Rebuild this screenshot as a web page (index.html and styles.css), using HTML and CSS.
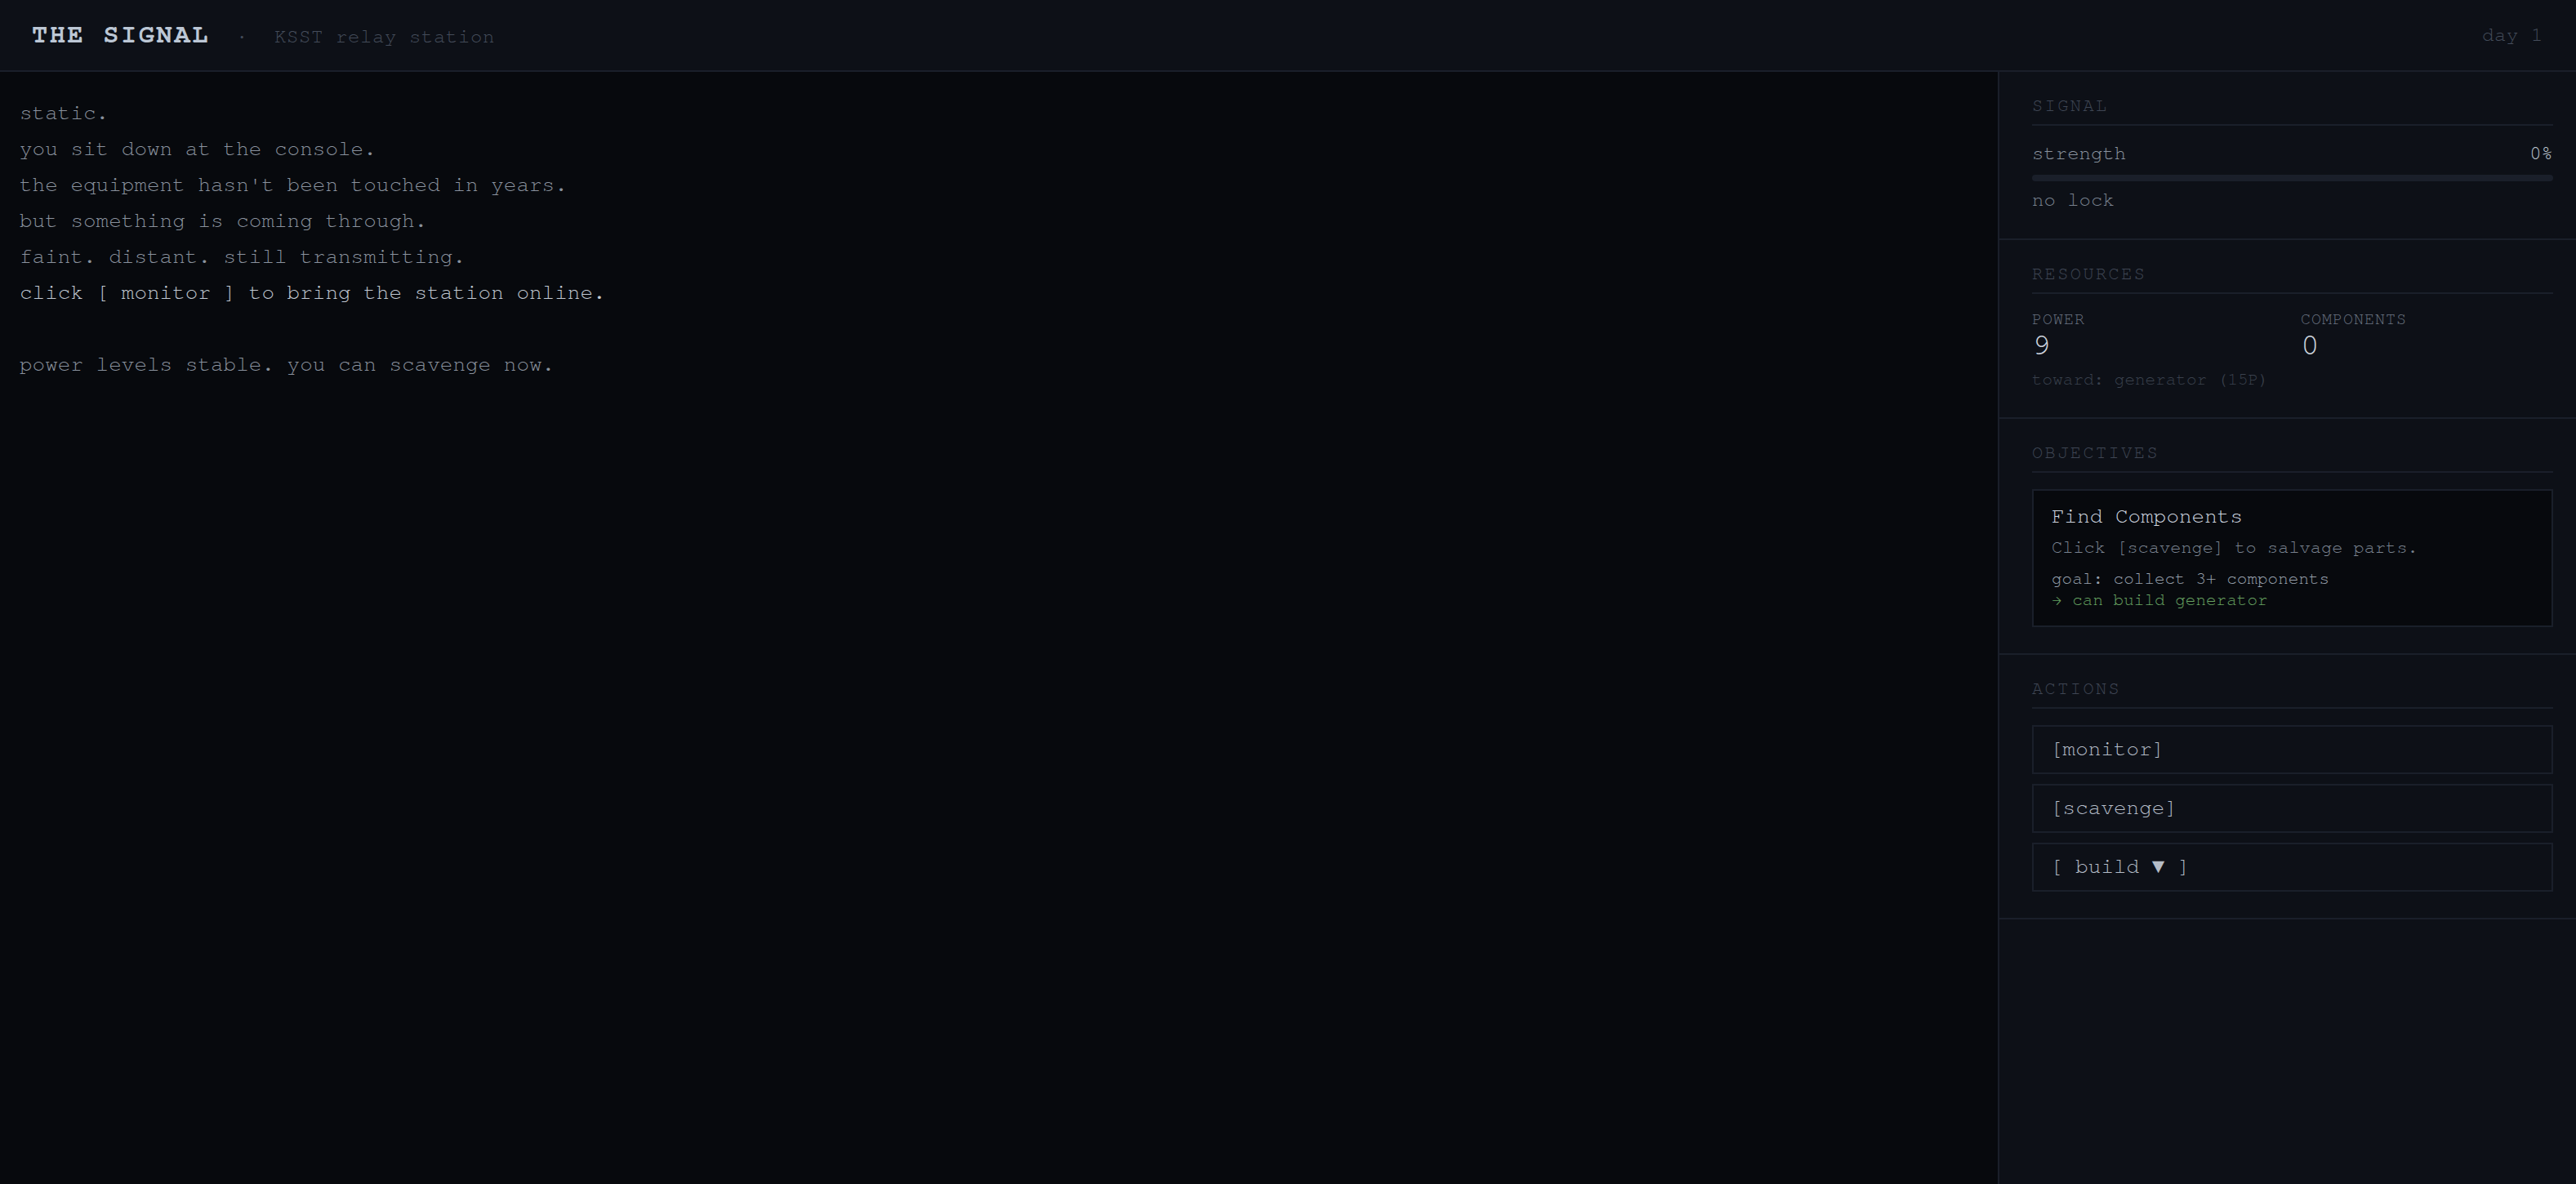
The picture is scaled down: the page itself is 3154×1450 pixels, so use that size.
FILE: index.html
```html
<!DOCTYPE html>
<html lang="en">
<head>
<meta charset="utf-8">
<title>THE SIGNAL</title>
<link rel="stylesheet" href="styles.css">
</head>
<body>
<div class="app">
  <header class="topbar">
    <div class="brand">
      <span class="title">THE SIGNAL</span>
      <span class="sep">·</span>
      <span class="sub">KSST relay station</span>
    </div>
    <span class="day">day 1</span>
  </header>
  <div class="body">
    <main class="log">
      <div class="line">static.</div>
      <div class="line">you sit down at the console.</div>
      <div class="line">the equipment hasn't been touched in years.</div>
      <div class="line">but something is coming through.</div>
      <div class="line">faint. distant. still transmitting.</div>
      <div class="line em">click [ monitor ] to bring the station online.</div>
      <div class="line blank"></div>
      <div class="line">power levels stable. you can scavenge now.</div>
    </main>
    <aside class="side">
      <section class="panel">
        <div class="panel-label">SIGNAL</div>
        <div class="sig-row">
          <span class="sig-name">strength</span>
          <span class="sig-val">0%</span>
        </div>
        <div class="bar"><div class="bar-fill" style="width:0%"></div></div>
        <div class="sig-status">no lock</div>
      </section>
      <section class="panel">
        <div class="panel-label">RESOURCES</div>
        <div class="res-grid">
          <div class="res">
            <div class="res-name">POWER</div>
            <div class="res-val">9</div>
          </div>
          <div class="res">
            <div class="res-name">COMPONENTS</div>
            <div class="res-val">0</div>
          </div>
        </div>
        <div class="toward">toward: generator (15P)</div>
      </section>
      <section class="panel">
        <div class="panel-label">OBJECTIVES</div>
        <div class="card">
          <div class="card-title">Find Components</div>
          <div class="card-desc">Click [scavenge] to salvage parts.</div>
          <div class="card-goal">goal: collect 3+ components</div>
          <div class="card-reward">→ can build generator</div>
        </div>
      </section>
      <section class="panel">
        <div class="panel-label">ACTIONS</div>
        <div class="actions">
          <button class="act">[monitor]</button>
          <button class="act">[scavenge]</button>
          <button class="act">[ build ▼ ]</button>
        </div>
      </section>
    </aside>
  </div>
</div>
</body>
</html>
```
FILE: styles.css
```css
* { box-sizing: border-box; }
html, body {
  margin: 0;
  padding: 0;
  height: 100%;
  background: #07090d;
  font-family: "TeX Gyre Cursor", "Liberation Mono", monospace;
}
.app {
  display: flex;
  flex-direction: column;
  height: 100vh;
}
.topbar {
  flex: 0 0 auto;
  height: 88px;
  background: #0d1017;
  border-bottom: 2px solid #1a1f2a;
  display: flex;
  align-items: center;
  justify-content: space-between;
  padding: 0 40px 0 39px;
}
.brand {
  display: flex;
  align-items: baseline;
  gap: 32px;
  margin-bottom: 8px;
}
.title {
  font-weight: bold;
  font-size: 32px;
  letter-spacing: 2.6px;
  color: #bcc7d5;
}
.sep, .sub, .day {
  font-size: 24px;
  letter-spacing: 0.6px;
  color: #444c5a;
}
.day { margin-bottom: 4px; }
.body {
  flex: 1 1 auto;
  display: flex;
  min-height: 0;
}
.log {
  flex: 1 1 auto;
  padding: 27px 24px;
  background: #07090d;
}
.line {
  font-size: 26px;
  line-height: 44px;
  color: #8a929e;
  white-space: pre;
}
.line.em { color: #c2cad4; }
.line.blank { height: 44px; }
.side {
  flex: 0 0 708px;
  width: 708px;
  background: #0d1017;
  border-left: 2px solid #1a1f2a;
}
.panel {
  display: flex;
  flex-direction: column;
  padding: 28px 28px 32px 40px;
  border-bottom: 2px solid #1a1f2a;
}
.panel-label {
  font-size: 22px;
  line-height: 26px;
  letter-spacing: 2.4px;
  color: #3f4654;
  padding-bottom: 10px;
  border-bottom: 2px solid #1a1f2a;
  margin-bottom: 18px;
}
.sig-row {
  display: flex;
  justify-content: space-between;
  align-items: baseline;
  line-height: 29px;
}
.sig-name {
  font-size: 24px;
  color: #8a939f;
}
.sig-val {
  font-size: 24px;
  color: #bcc5cf;
}
.bar {
  margin-top: 13px;
  height: 8px;
  border-radius: 4px;
  background: #1a1f2a;
  overflow: hidden;
}
.bar-fill {
  height: 100%;
  background: #5e9a58;
}
.sig-status {
  margin-top: 7px;
  margin-bottom: 2px;
  font-size: 24px;
  line-height: 29px;
  color: #79828f;
}
.res-grid {
  display: grid;
  grid-template-columns: 1fr 1fr;
  gap: 20px;
}
.res-name {
  font-size: 20px;
  line-height: 24px;
  letter-spacing: 1px;
  color: #6a7381;
}
.res-val {
  font-size: 38px;
  line-height: 38px;
  color: #ccd4de;
}
.toward {
  margin-top: 11px;
  margin-bottom: 2px;
  font-size: 21px;
  line-height: 26px;
  color: #3a414d;
}
.card {
  margin-top: 2px;
  background: #07090d;
  border: 2px solid #1a1f2a;
  padding: 14px 22px 19px;
}
.card-title {
  font-size: 26px;
  line-height: 32px;
  color: #d0d7e0;
}
.card-desc {
  margin-top: 8px;
  font-size: 22px;
  line-height: 30px;
  color: #7a8390;
}
.card-goal {
  margin-top: 10px;
  font-size: 21px;
  line-height: 26px;
  color: #99a2ae;
}
.card-reward {
  font-size: 21px;
  line-height: 26px;
  color: #68a462;
}
.actions {
  margin-top: 2px;
  display: flex;
  flex-direction: column;
  gap: 12px;
}
.act {
  display: block;
  width: 100%;
  height: 60px;
  margin: 0;
  padding: 0 20px 4px;
  text-align: left;
  background: transparent;
  border: 2px solid #1a1f2a;
  border-radius: 0;
  font-family: "TeX Gyre Cursor", "Liberation Mono", monospace;
  font-size: 26px;
  color: #b5bdc8;
  cursor: pointer;
}
```
